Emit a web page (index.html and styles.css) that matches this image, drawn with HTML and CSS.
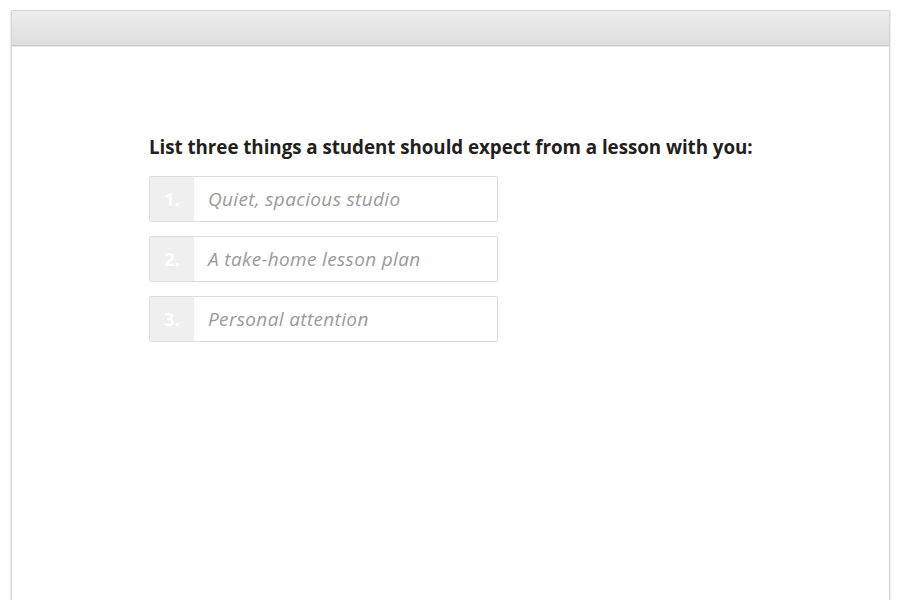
FILE: index.html
```html
<!DOCTYPE html>
<html>
<head>
<meta charset="utf-8">
<link rel="stylesheet" href="styles.css">
</head>
<body>
<div class="frame">
  <div class="bar"></div>
  <div class="content">
    <h1 class="title">List three things a student should expect from a lesson with you:</h1>
    <div class="list">
      <div class="field"><span class="num">1.</span><span class="ph">Quiet, spacious studio</span></div>
      <div class="field"><span class="num">2.</span><span class="ph">A take-home lesson plan</span></div>
      <div class="field"><span class="num">3.</span><span class="ph">Personal attention</span></div>
    </div>
  </div>
</div>
</body>
</html>
```
FILE: styles.css
```css
html, body {
  margin: 0;
  padding: 0;
  background: #ffffff;
  height: 100%;
  overflow: hidden;
}
body {
  padding: 10px 10px 0 11px;
  box-sizing: border-box;
  font-family: "Open Sans", "Liberation Sans", sans-serif;
}
.frame {
  height: 100%;
  box-sizing: border-box;
  border: 1px solid #d6d6d6;
  border-bottom: none;
  border-radius: 2px 2px 0 0;
  box-shadow: 1px 0 1px rgba(0,0,0,0.08), -1px 0 1px rgba(0,0,0,0.08);
  background: #fff;
}
.bar {
  height: 34px;
  background: linear-gradient(#ededed, #dedede);
  border-bottom: 1px solid #c9c9c9;
  box-shadow: 0 1px 0 #e6e6e6;
}
.content {
  padding: 88px 0 0 137px;
}
.title {
  margin: 0;
  font-size: 18.8px;
  font-weight: 700;
  color: #231f20;
  line-height: 26px;
  letter-spacing: -0.05px;
}
.list {
  margin-top: 16px;
  display: flex;
  flex-direction: column;
  gap: 14px;
}
.field {
  width: 347px;
  height: 44px;
  border: 1px solid #dcdcdc;
  border-radius: 2px;
  display: flex;
  align-items: center;
  background: #fff;
}
.num {
  width: 44px;
  height: 100%;
  background: #efefef;
  color: #ffffff;
  font-weight: 700;
  font-size: 18px;
  display: flex;
  align-items: center;
  justify-content: center;
}
.ph {
  padding-left: 14px;
  font-style: italic;
  font-size: 19px;
  letter-spacing: 0.35px;
  color: #9a9a9a;
}
```
